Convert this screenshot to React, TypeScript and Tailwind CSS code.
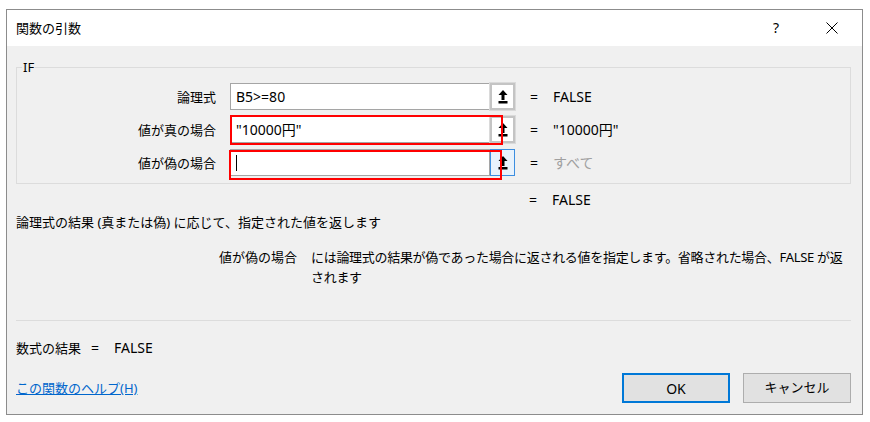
import React from "react";

const FONT = { fontFamily: '"Noto Sans", "Noto Sans CJK JP", sans-serif' };

function RefIcon() {
  return (
    <svg width="10" height="14" viewBox="0 0 10 14">
      <polygon points="5,0 9.5,5 0.5,5" fill="#000" />
      <rect x="3.5" y="5" width="3" height="5" fill="#000" />
      <rect x="0.5" y="11" width="9" height="2.5" fill="#000" />
    </svg>
  );
}

function Row({
  label,
  value,
  result,
  resultGrey,
  variant,
  red,
}: {
  label: string;
  value: React.ReactNode;
  result: string;
  resultGrey?: boolean;
  variant: "grey" | "blue";
  red?: "a" | "b";
}) {
  return (
    <div className="flex h-[27px] shrink-0 items-center">
      <div className="w-[199px] text-right text-[13px] leading-[16px] text-black">{label}</div>
      <div className="relative ml-[14px] flex h-[27px] w-[285px]">
        <div className="flex flex-1 items-center border border-[#a5a5a5] bg-white pl-[5px] text-[14px] text-black">
          {value}
        </div>
        {variant === "grey" ? (
          <div className="flex w-[25px] items-center justify-center border-[2px] border-[#c4c4c4] bg-white outline outline-1 outline-[#dadada]">
            <RefIcon />
          </div>
        ) : (
          <div className="flex w-[25px] items-center justify-center border border-[#3c8ee0] bg-[#e8f2fc]">
            <RefIcon />
          </div>
        )}
        {red === "a" && (
          <div className="absolute left-0 top-[-1px] h-[30px] w-[273px] border-2 border-[#ff0000]" />
        )}
        {red === "b" && (
          <div className="absolute left-[-1px] top-[1px] h-[30px] w-[273px] border-2 border-[#ff0000]" />
        )}
      </div>
      <div className="ml-[15px] text-[14px] leading-[16px] text-black">=</div>
      <div
        className={
          "ml-[15px] text-[14px] leading-[16px] " + (resultGrey ? "text-[#a0a0a0]" : "text-black")
        }
      >
        {result}
      </div>
    </div>
  );
}

export default function App() {
  return (
    <div className="h-[422px] w-[870px] bg-white pl-[6px] pt-[9px]" style={FONT}>
      <div className="flex h-[406px] w-[857px] flex-col overflow-hidden border border-[#8c8c8c] bg-[#f0f0f0]">
        {/* title bar */}
        <div className="relative flex h-[36px] shrink-0 items-center bg-white pl-[9px]">
          <span className="text-[13px] leading-[16px] text-black">関数の引数</span>
          <span className="absolute left-[766px] top-[10px] text-[14px] leading-[16px] text-black">?</span>
          <svg className="absolute left-[819px] top-[12px]" width="12" height="12" viewBox="0 0 12 12">
            <path d="M0.5 0.5 L11.5 11.5 M11.5 0.5 L0.5 11.5" stroke="#000" strokeWidth="1" />
          </svg>
        </div>

        <div className="flex shrink-0 flex-col px-[9px]">
          {/* group box */}
          <div className="relative mt-[21px] flex h-[117px] w-[835px] shrink-0 flex-col gap-[6px] border border-[#dcdcdc] pt-[15px]">
            <span className="absolute left-[5px] top-[-9px] bg-[#f0f0f0] px-[1px] text-[13px] leading-[16px] text-black">
              IF
            </span>
            <Row label="論理式" value="B5>=80" result="FALSE" variant="grey" />
            <Row label="値が真の場合" value={'"10000円"'} result={'"10000円"'} variant="grey" red="a" />
            <Row
              label="値が偽の場合"
              value={<span className="inline-block h-[16px] w-[1px] bg-black" />}
              result="すべて"
              resultGrey
              variant="blue"
              red="b"
            />
          </div>

          <div className="mt-[8px] flex h-[16px] shrink-0 items-center pl-[513px] text-[14px] leading-[16px] text-black">
            <span>=</span>
            <span className="ml-[15px]">FALSE</span>
          </div>

          <div className="mt-[6px] shrink-0 text-[13px] leading-[16px] text-black">
            論理式の結果 (真または偽) に応じて、指定された値を返します
          </div>

          <div className="mt-[17px] flex shrink-0 text-[13px] leading-[20px] text-black">
            <div className="w-[281px] shrink-0 text-right">値が偽の場合</div>
            <div className="ml-[14px] whitespace-nowrap tracking-[-0.3px]">
              には論理式の結果が偽であった場合に返される値を指定します。省略された場合、FALSE が返
              <br />
              されます
            </div>
          </div>

          <div className="mt-[33px] h-[1px] w-[835px] shrink-0 bg-[#dcdcdc]" />

          <div className="mt-[19px] flex shrink-0 text-[13px] leading-[16px] text-black">
            <span>数式の結果</span>
            <span className="ml-[10px] text-[14px]">=</span>
            <span className="ml-[15px] text-[14px]">FALSE</span>
          </div>

          <div className="mt-[17px] flex h-[30px] w-[835px] shrink-0 items-center">
            <a className="text-[13px] leading-[16px] text-[#0066cc] underline">この関数のヘルプ(H)</a>
            <div className="ml-auto flex gap-[13px]">
              <button className="flex h-[30px] w-[108px] items-center justify-center border-2 border-[#0078d7] bg-[#e1e1e1] text-[14px] text-black">
                OK
              </button>
              <button className="flex h-[30px] w-[108px] items-center justify-center border border-[#adadad] bg-[#e1e1e1] text-[13px] text-black">
                キャンセル
              </button>
            </div>
          </div>
        </div>
      </div>
    </div>
  );
}
